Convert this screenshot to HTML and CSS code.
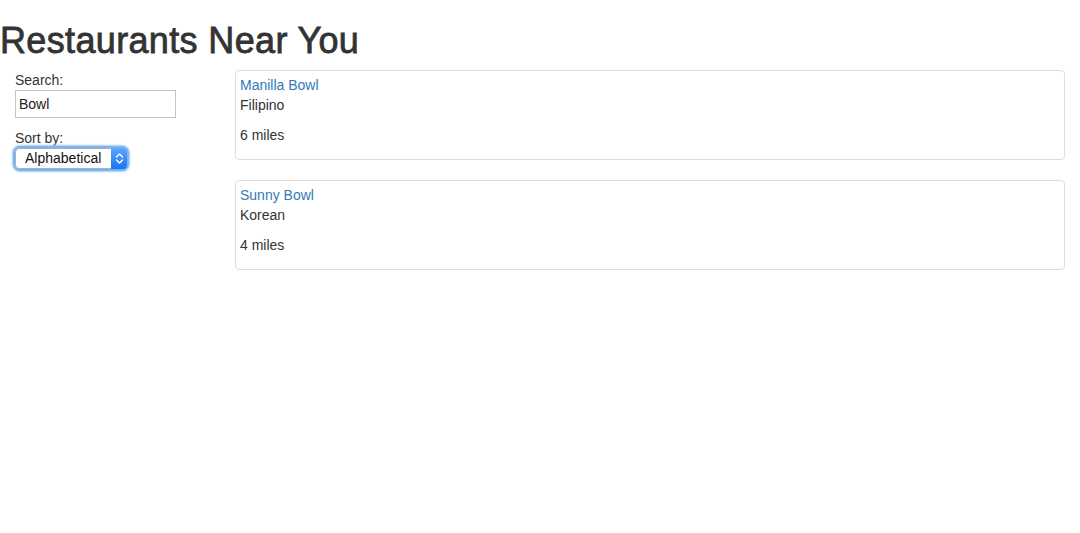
FILE: index.html
```html
<!DOCTYPE html>
<html>
<head>
<meta charset="utf-8">
<title>Restaurants Near You</title>
<link rel="stylesheet" href="styles.css">
</head>
<body>
<h1 class="title">Restaurants Near You</h1>
<div class="layout">
  <aside class="filters">
    <label class="field-label" for="search">Search:</label>
    <input class="search-input" id="search" type="text" value="Bowl">
    <label class="field-label sort-label" for="sort">Sort by:</label>
    <span class="select-wrap">
      <select class="sort-select" id="sort">
        <option>Alphabetical</option>
        <option>Distance</option>
      </select>
      <span class="select-arrow">
        <svg width="9" height="13" viewBox="0 0 9 13"><path d="M1.5 5 L4.5 2 L7.5 5 M1.5 8 L4.5 11 L7.5 8" fill="none" stroke="#fff" stroke-width="1.4" stroke-linecap="round" stroke-linejoin="round"/></svg>
      </span>
    </span>
  </aside>
  <main class="results">
    <div class="card">
      <a class="card-name" href="#">Manilla Bowl</a>
      <p class="card-line">Filipino</p>
      <p class="card-line">6 miles</p>
    </div>
    <div class="card">
      <a class="card-name" href="#">Sunny Bowl</a>
      <p class="card-line">Korean</p>
      <p class="card-line">4 miles</p>
    </div>
  </main>
</div>
</body>
</html>
```
FILE: styles.css
```css
* { box-sizing: border-box; }
body {
  margin: 0;
  font-family: "Liberation Sans", Arial, sans-serif;
  font-size: 14px;
  line-height: 20px;
  color: #333;
  background: #fff;
}
.title {
  margin: 21px 0 9px;
  font-size: 36px;
  line-height: 1.1;
  font-weight: 400;
  letter-spacing: 0.35px;
  -webkit-text-stroke: 0.8px #333;
  color: #333;
}
.layout {
  display: grid;
  grid-template-columns: 220px 1fr;
  padding: 0 15px;
}
.filters {
  display: flex;
  flex-direction: column;
  align-items: flex-start;
}
.field-label {
  display: block;
  line-height: 20px;
}
.search-input {
  width: 161px;
  height: 28px;
  margin: 0;
  padding: 0 3px;
  border: 1px solid #c4c4c4;
  font-family: inherit;
  font-size: 14px;
  color: #222;
  outline: none;
}
.sort-label { margin-top: 10px; }
.select-wrap {
  position: relative;
  display: inline-block;
  width: 112px;
  height: 21px;
  border-radius: 5px;
  box-shadow: 0 0 0 2px #7fb2f0, 0 0 2px 3px #a9cdf7;
}
.sort-select {
  appearance: none;
  -webkit-appearance: none;
  width: 112px;
  height: 21px;
  margin: 0;
  padding: 0 0 0 9px;
  border: 1px solid #9fb4cc;
  border-radius: 4px;
  background: #fff;
  font-family: inherit;
  font-size: 14px;
  line-height: 19px;
  color: #111;
  outline: none;
}
.select-arrow {
  position: absolute;
  top: 0;
  right: 0;
  width: 16px;
  height: 21px;
  display: flex;
  align-items: center;
  justify-content: center;
  border-radius: 0 4px 4px 0;
  background: linear-gradient(#5aa6fb, #1a76f0);
  pointer-events: none;
}
.results {
  display: flex;
  flex-direction: column;
  gap: 20px;
}
.card {
  padding: 4px 5px 4px 4px;
  border: 1px solid #ddd;
  border-radius: 4px;
}
.card-name {
  display: block;
  color: #337ab7;
  text-decoration: none;
}
.card-line {
  margin: 0 0 10px;
}
```
